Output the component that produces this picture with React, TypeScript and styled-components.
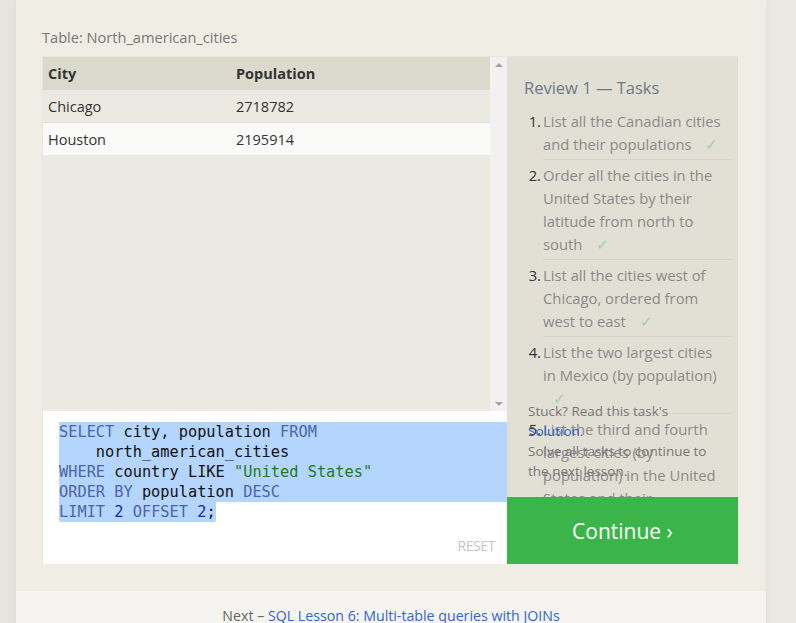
import React from "react";
import styled, { createGlobalStyle } from "styled-components";

const Global = createGlobalStyle`
  html, body { margin: 0; padding: 0; }
  body {
    background: linear-gradient(90deg, #e7e3df 0%, #e9e5e1 50%, #ece8e4 100%);
    font-family: "Open Sans", "Noto Sans", sans-serif;
    overflow: hidden;
  }
`;

const Main = styled.div`
  width: 750px;
  margin-left: 16px;
  background: #f0ede5;
  box-shadow: 0 0 6px rgba(0, 0, 0, 0.05);
  min-height: 623px;
`;

const Section = styled.section`
  padding: 27px 28px 27px 26px;
`;

const TableLabel = styled.div`
  font-size: 14.6px;
  line-height: 20px;
  color: #777;
  margin-bottom: 9px;
`;

const Board = styled.div`
  display: grid;
  grid-template-columns: 465px 231px;
  height: 508px;
  background: #e8e6dc;
`;

const LeftCol = styled.div`
  display: flex;
  flex-direction: column;
  padding: 1px 0 0 1px;
  min-height: 0;
`;

const TableArea = styled.div`
  display: flex;
  height: 354px;
  background: #ebe9e1;
`;

const TableWrap = styled.div`
  flex: 1;
`;

const Table = styled.table`
  width: 100%;
  border-collapse: collapse;
  font-size: 14.5px;
  color: #333;
`;

const Th = styled.th<{ $w?: number }>`
  text-align: left;
  font-weight: 700;
  background: #dbdacd;
  height: 33px;
  padding: 0 5px;
  width: ${(p) => (p.$w ? `${p.$w}px` : "auto")};
`;

const Tr = styled.tr<{ $alt?: boolean }>`
  background: ${(p) => (p.$alt ? "#fafaf9" : "#ebe9e1")};
  border-top: ${(p) => (p.$alt ? "1px solid #dedcd6" : "none")};
`;

const Td = styled.td`
  height: 32px;
  padding: 0 5px;
`;

const Scrollbar = styled.div`
  width: 17px;
  background: #f1f1f1;
  display: flex;
  flex-direction: column;
  justify-content: space-between;
  align-items: center;
  padding: 6px 0 5px;
  box-sizing: border-box;
`;

const Arrow = styled.div<{ $down?: boolean }>`
  width: 0;
  height: 0;
  border-left: 4px solid transparent;
  border-right: 4px solid transparent;
  ${(p) =>
    p.$down ? "border-top: 4px solid #a3a3a3;" : "border-bottom: 4px solid #a3a3a3;"}
`;

const Editor = styled.div`
  flex: 1;
  background: #fff;
  position: relative;
  padding: 11px 0 0 16px;
  font-family: "DejaVu Sans Mono", "Liberation Mono", monospace;
  font-size: 15.3px;
  color: #111;
`;

const CodeLine = styled.div<{ $inline?: boolean }>`
  display: ${(p) => (p.$inline ? "inline-block" : "block")};
  background: #b4d5fe;
  line-height: 20px;
  height: 20px;
  white-space: pre;
  border-radius: ${(p) => (p.$inline ? "0 0 2px 2px" : "0")};
`;

const Kw = styled.span`
  color: #4d64a8;
`;
const Num = styled.span`
  color: #1f1fb0;
`;
const Str = styled.span`
  color: #1e7a1e;
`;

const Reset = styled.div`
  position: absolute;
  right: 12px;
  bottom: 9px;
  font-family: "Open Sans", sans-serif;
  font-size: 14px;
  color: #c4c4c4;
  letter-spacing: -0.4px;
`;

const RightCol = styled.div`
  display: flex;
  flex-direction: column;
  padding-top: 1px;
  min-height: 0;
`;

const Panel = styled.div`
  flex: 1;
  min-height: 0;
  overflow: hidden;
  background: #e2e0d4;
  position: relative;
  padding: 19px 6px 0 17px;
`;

const PanelTitle = styled.div`
  font-size: 16.5px;
  line-height: 24px;
  color: #6c7a88;
  margin-bottom: 6px;
`;

const TaskList = styled.ol`
  list-style: none;
  margin: 0;
  padding: 0;
`;

const Task = styled.li`
  display: flex;
  font-size: 14.8px;
  line-height: 23px;
`;

const TaskNum = styled.span`
  width: 17px;
  flex: none;
  color: #333;
  padding-top: 4px;
  text-align: right;
  box-sizing: border-box;
`;

const TaskBody = styled.div<{ $last?: boolean }>`
  width: 186px;
  flex: none;
  margin-left: 2px;
  padding: 4px 3px 3px 0;
  color: #8a8a8a;
  border-bottom: ${(p) => (p.$last ? "none" : "1px solid #d6d4c8")};
`;

const NoWrap = styled.span`
  white-space: nowrap;
`;

const Check = styled.span`
  color: #9ed3a3;
  margin-left: 10px;
`;

const Stuck = styled.div`
  position: absolute;
  left: 21px;
  top: 344px;
  width: 186px;
  font-size: 13.5px;
  line-height: 20px;
  color: #777;
`;

const SolutionLink = styled.a`
  color: #2a5bd7;
  text-decoration: none;
`;

const Continue = styled.button`
  height: 67px;
  border: none;
  background: #3bb54a;
  color: #fff;
  font-family: "Open Sans", sans-serif;
  font-size: 21px;
  padding: 0;
  cursor: pointer;
`;

const Footer = styled.footer`
  background: #f5f4f0;
  padding-top: 14px;
  text-align: center;
  font-size: 14.2px;
  line-height: 22px;
  color: #666;
  height: 40px;
`;

const FooterLink = styled.a`
  color: #3366cc;
  text-decoration: none;
`;

const tasks: { text: React.ReactNode; done: boolean }[] = [
  { text: "List all the Canadian cities and their populations", done: true },
  { text: "Order all the cities in the United States by their latitude from north to south", done: true },
  { text: "List all the cities west of Chicago, ordered from west to east", done: true },
  {
    text: (
      <>
        List the two largest cities <NoWrap>in Mexico (by population)</NoWrap>
      </>
    ),
    done: true,
  },
  { text: "List the third and fourth largest cities (by population) in the United States and their population", done: false },
];

export default function App() {
  return (
    <>
      <Global />
      <Main>
        <Section>
          <TableLabel>Table: North_american_cities</TableLabel>
          <Board>
            <LeftCol>
              <TableArea>
                <TableWrap>
                  <Table>
                    <thead>
                      <tr>
                        <Th $w={178}>City</Th>
                        <Th>Population</Th>
                      </tr>
                    </thead>
                    <tbody>
                      <Tr>
                        <Td>Chicago</Td>
                        <Td>2718782</Td>
                      </Tr>
                      <Tr $alt>
                        <Td>Houston</Td>
                        <Td>2195914</Td>
                      </Tr>
                    </tbody>
                  </Table>
                </TableWrap>
                <Scrollbar>
                  <Arrow />
                  <Arrow $down />
                </Scrollbar>
              </TableArea>
              <Editor>
                <CodeLine>
                  <Kw>SELECT</Kw> city, population <Kw>FROM</Kw>
                </CodeLine>
                <CodeLine>{"    north_american_cities"}</CodeLine>
                <CodeLine>
                  <Kw>WHERE</Kw> country LIKE <Str>"United States"</Str>
                </CodeLine>
                <CodeLine>
                  <Kw>ORDER BY</Kw> population <Kw>DESC</Kw>
                </CodeLine>
                <CodeLine $inline>
                  <Kw>LIMIT</Kw> <Num>2</Num> <Kw>OFFSET</Kw> <Num>2</Num>;
                </CodeLine>
                <Reset>RESET</Reset>
              </Editor>
            </LeftCol>
            <RightCol>
              <Panel>
                <PanelTitle>Review 1 — Tasks</PanelTitle>
                <TaskList>
                  {tasks.map((t, i) => (
                    <Task key={i}>
                      <TaskNum>{i + 1}.</TaskNum>
                      <TaskBody $last={i === tasks.length - 1}>
                        {t.text}
                        {t.done && (
                          <>
                            {" "}
                            <Check>✓</Check>
                          </>
                        )}
                      </TaskBody>
                    </Task>
                  ))}
                </TaskList>
                <Stuck>
                  Stuck? Read this task's <SolutionLink href="#">Solution</SolutionLink>.
                  <br />
                  Solve all tasks to continue to the next lesson.
                </Stuck>
              </Panel>
              <Continue>Continue ›</Continue>
            </RightCol>
          </Board>
        </Section>
        <Footer>
          Next – <FooterLink href="#">SQL Lesson 6: Multi-table queries with JOINs</FooterLink>
        </Footer>
      </Main>
    </>
  );
}
